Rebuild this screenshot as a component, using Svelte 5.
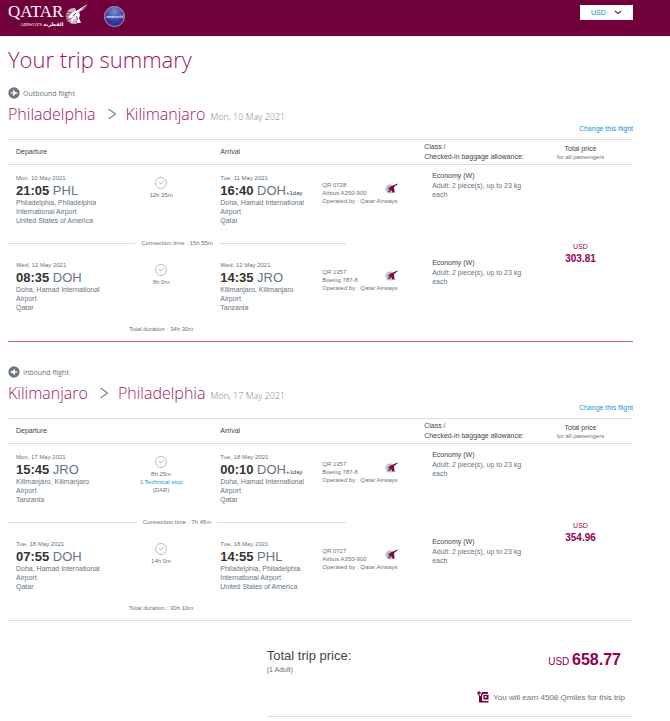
<script>
  const trips = [
    {
      id: 'outbound',
      label: 'Outbound flight',
      from: 'Philadelphia',
      to: 'Kilimanjaro',
      date: 'Mon, 10 May 2021',
      connection: '15h 55m',
      total: '34h 30m',
      price: '303.81',
      legs: [
        {
          departure: { date: 'Mon, 10 May 2021', time: '21:05', code: 'PHL', place: ['Philadelphia, Philadelphia', 'International Airport', 'United States of America'] },
          arrival: { date: 'Tue, 11 May 2021', time: '16:40', code: 'DOH', extra: '+1day', place: ['Doha, Hamad International', 'Airport', 'Qatar'] },
          duration: '12h 35m',
          flight: 'QR 0728',
          plane: 'Airbus A350-900'
        },
        {
          departure: { date: 'Wed, 12 May 2021', time: '08:35', code: 'DOH', place: ['Doha, Hamad International', 'Airport', 'Qatar'] },
          arrival: { date: 'Wed, 12 May 2021', time: '14:35', code: 'JRO', place: ['Kilimanjaro, Kilimanjaro', 'Airport', 'Tanzania'] },
          duration: '6h 0m',
          flight: 'QR 1357',
          plane: 'Boeing 787-8'
        }
      ]
    },
    {
      id: 'inbound',
      label: 'Inbound flight',
      from: 'Kilimanjaro',
      to: 'Philadelphia',
      date: 'Mon, 17 May 2021',
      connection: '7h 45m',
      total: '30h 10m',
      price: '354.96',
      legs: [
        {
          departure: { date: 'Mon, 17 May 2021', time: '15:45', code: 'JRO', place: ['Kilimanjaro, Kilimanjaro', 'Airport', 'Tanzania'] },
          arrival: { date: 'Tue, 18 May 2021', time: '00:10', code: 'DOH', extra: '+1day', place: ['Doha, Hamad International', 'Airport', 'Qatar'] },
          duration: '8h 25m',
          stop: '1 Technical stop',
          stopCode: '(DAR)',
          flight: 'QR 1357',
          plane: 'Boeing 787-8'
        },
        {
          departure: { date: 'Tue, 18 May 2021', time: '07:55', code: 'DOH', place: ['Doha, Hamad International', 'Airport', 'Qatar'] },
          arrival: { date: 'Tue, 18 May 2021', time: '14:55', code: 'PHL', place: ['Philadelphia, Philadelphia', 'International Airport', 'United States of America'] },
          duration: '14h 0m',
          flight: 'QR 0727',
          plane: 'Airbus A350-900'
        }
      ]
    }
  ];

  let currency = 'USD';
</script>

{#snippet endpoint(point)}
  <div class="date">{point.date}</div>
  <div class="time">
    <strong>{point.time}</strong> {point.code}{#if point.extra}<small>{point.extra}</small>{/if}
  </div>
  {#each point.place as line}
    <div class="place">{line}</div>
  {/each}
{/snippet}

<header>
  <a class="brand" href="#home" aria-label="Qatar Airways">
    <span class="brand-text">
      <span class="brand-name">QATAR</span>
      <span class="brand-sub">AIRWAYS <span lang="ar">القطرية</span></span>
    </span>
    <svg class="oryx" viewBox="0 0 24 22" aria-hidden="true">
      <path d="M12 4A8 8 0 1 0 17 17L13 18L15 10Z" fill="#cdb3c1" />
      <path d="M1 8l8 1M0 11l8 0M0 14l7-1M2 17l6-3M5 20l4-4" stroke="#70003a" stroke-width=".8" />
      <path d="M5 14c2-4 4-6 8-7L24 .5l-.5 1.200L17 6l6.500-3L16 8l1 3-1 3 2 5h-4l-1-5-3 2.500-2 3.500c-1-2 0-4 2-6l3-3.500-5 3.500z" fill="#fff" />
      <path d="M10 12l3-3M13.500 12l1 4" stroke="#70003a" stroke-width=".8" />
    </svg>
  </a>
  <a class="oneworld" href="#oneworld"><b>one</b>world</a>
  <label class="currency">
    <select bind:value={currency} aria-label="Currency">
      <option>USD</option>
      <option>EUR</option>
      <option>QAR</option>
    </select>
    <svg viewBox="0 0 8 5" aria-hidden="true"><path d="M1 1l3 2.500L7 1" fill="none" stroke="#8e2157" stroke-width="1.300" /></svg>
  </label>
</header>

<main>
  <h1>Your trip summary</h1>

  {#each trips as trip (trip.id)}
    <section class={trip.id}>
      <div class="direction">
        <svg viewBox="0 0 12 12" class:flip={trip.id === 'inbound'} aria-hidden="true">
          <circle cx="6" cy="6" r="5.700" fill="#6b7883" />
          <path d="M2.500 5.500h2.500L4.800 3.200h1L7.700 5.300H9q1.200.7 0 1.400H7.700L5.800 8.800h-1L5 6.500H2.500z" fill="#fff" />
        </svg>
        {trip.label}
      </div>

      <h2>
        {trip.from}
        <svg viewBox="0 0 8 12" aria-hidden="true"><path d="M.5 1l7 5-7 5" fill="none" stroke="#7b8a94" stroke-width="1.200" /></svg>
        {trip.to}
        <small>{trip.date}</small>
      </h2>

      <a class="change" href="#change-{trip.id}">Change this flight</a>

      <table>
        <colgroup>
          <col class="c-departure" />
          <col class="c-duration" />
          <col class="c-arrival" />
          <col class="c-flight" />
          <col class="c-class" />
          <col class="c-price" />
        </colgroup>
        <thead>
          <tr>
            <th>Departure</th>
            <td></td>
            <th>Arrival</th>
            <td></td>
            <th class="h-class">Class /<br />Checked-in baggage allowance:</th>
            <th class="h-price">Total price<small>for all passengers</small></th>
          </tr>
        </thead>
        <tbody>
          {#each trip.legs as leg, i}
            <tr class="leg">
              <td>{@render endpoint(leg.departure)}</td>
              <td class="duration">
                <svg viewBox="0 0 12 12" aria-hidden="true">
                  <circle cx="6" cy="6" r="5.500" fill="none" stroke="#98a3ab" stroke-width=".7" />
                  <path d="M4 5.200l1.800 1.600L8.600 4.200" fill="none" stroke="#98a3ab" stroke-width=".8" />
                </svg>
                <div class="hours">{leg.duration}</div>
                {#if leg.stop}
                  <a href="#stop">{leg.stop}</a>
                  <div>{leg.stopCode}</div>
                {/if}
              </td>
              <td>{@render endpoint(leg.arrival)}</td>
              <td class="flight">
                <div class="plane">
                  <div>{leg.flight}<br />{leg.plane}</div>
                  <svg viewBox="0 0 13 11" aria-hidden="true">
                    <circle cx="5" cy="6" r="4.500" fill="#b9c0c5" />
                    <path d="M3 6c1-1.500 2-2.500 4-3L12.500.5l.3.8L9 4v2l.8 3.500H7.200L6.500 7 4 9l-1.200.2L4.800 6z" fill="#7d0a45" />
                  </svg>
                </div>
                Operated by : Qatar Airways
              </td>
              <td class="cabin">
                <div>Economy (W)</div>
                <p>Adult: 2 piece(s), up to 23 kg each</p>
              </td>
              {#if i === 0}
                <td class="price" rowspan="4">USD<strong>{trip.price}</strong></td>
              {/if}
            </tr>
            {#if i === 0}
              <tr>
                <td class="connection" colspan="5">
                  <div>Connection time : {trip.connection}</div>
                </td>
              </tr>
            {/if}
          {/each}
          <tr class="total-duration">
            <td></td>
            <td>Total duration : {trip.total}</td>
            <td colspan="3"></td>
          </tr>
        </tbody>
      </table>
    </section>
  {/each}

  <section class="summary">
    <div class="total">
      <div class="total-label">Total trip price:<small>(1 Adult)</small></div>
      <div class="total-price">USD <strong>658.77</strong></div>
    </div>
    <div class="miles">
      <svg viewBox="0 0 12 12" aria-hidden="true">
        <path d="M2 0v5M0 2.200h4.500" stroke="#70003a" stroke-width="1.200" />
        <path d="M5 1h6v2H6.500L5 4.500v5L6.500 10H11.500v1.500H2V5h2V3h1z" fill="#70003a" />
        <rect x="6" y="3.700" width="5.500" height="5" rx=".5" fill="#70003a" />
        <path d="M11.500 3.200H6.200v5.800h5.300" fill="none" stroke="#fff" stroke-width=".6" />
        <circle cx="8.600" cy="6.100" r="1" fill="#fff" />
      </svg>
      You will earn 4508 Qmiles for this trip
    </div>
  </section>
</main>

<style>
  :global(body) {
    background: #fff;
    color: #66747f;
    font: 7px/9px 'Liberation Sans', Arial, sans-serif;
  }

  header {
    display: flex;
    align-items: center;
    height: 36px;
    box-sizing: border-box;
    padding: 0 37px 4px 8px;
    background: #70003a;
  }

  a {
    color: #1a96d2;
    text-decoration: none;
  }

  .brand {
    display: flex;
    color: #fff;
  }

  .brand-text {
    display: flex;
    flex-direction: column;
    font-family: 'Liberation Serif', serif;
  }

  .brand-name {
    font-size: 17px;
    line-height: 16px;
  }

  .brand-sub {
    padding-left: 12px;
    font-size: 5px;
    line-height: 8px;
    white-space: nowrap;
  }

  .brand-sub span {
    font-family: 'DejaVu Sans', sans-serif;
    font-weight: bold;
  }

  .oryx {
    width: 24px;
    height: 22px;
  }

  .oneworld {
    display: flex;
    align-items: center;
    justify-content: center;
    width: 19px;
    height: 19px;
    margin-left: 17px;
    border: 1px solid #a8a4d0;
    border-radius: 50%;
    background: radial-gradient(circle at 50% 25%, #8088cc, #3438a0 60%, #22247c);
    color: #fff;
    font-size: 4px;
  }

  .currency {
    display: flex;
    align-items: center;
    gap: 7px;
    height: 15px;
    margin: -8px 0 0 auto;
    padding: 0 11px;
    background: #fff;
  }

  select {
    appearance: none;
    padding: 0;
    border: 0;
    background: none;
    color: #1a86c4;
    font: 7px/9px 'Liberation Sans', Arial, sans-serif;
  }

  .currency svg {
    width: 8px;
    height: 5px;
  }

  main {
    padding: 8px 37px 0 8px;
  }

  h1,
  h2 {
    margin: 0;
    color: #9c1464;
    font-family: 'Open Sans', sans-serif;
    font-weight: 300;
  }

  h1 {
    margin-bottom: 12px;
    font-size: 22px;
    line-height: 30px;
  }

  .inbound {
    margin-top: 23px;
  }

  .direction {
    display: flex;
    align-items: center;
    gap: 3px;
    height: 14px;
    font-family: 'Open Sans', sans-serif;
  }

  .direction svg {
    width: 12px;
    height: 12px;
  }

  .flip {
    transform: scaleX(-1);
  }

  h2 {
    display: flex;
    align-items: baseline;
    height: 20px;
    margin-top: 4px;
    font-size: 16px;
    line-height: 20px;
  }

  h2 svg {
    width: 8px;
    height: 12px;
    margin: 0 10px 0 12px;
  }

  h2 small {
    margin-left: 5px;
    color: #7b8790;
    font-size: 9px;
  }

  .change {
    display: block;
    margin-bottom: 5px;
    line-height: 10px;
    text-align: right;
  }

  table {
    width: 100%;
    border-collapse: separate;
    border-spacing: 0;
    table-layout: fixed;
    border-bottom: 1px solid #cc5f9e;
  }

  .inbound table {
    border-color: #ddd;
  }

  .c-departure {
    width: 17.6%;
  }

  .c-duration {
    width: 13.8%;
  }

  .c-arrival {
    width: 17.6%;
  }

  .c-flight {
    width: 16.3%;
  }

  .c-class {
    width: 17.9%;
  }

  .c-price {
    width: 16.8%;
  }

  th,
  td {
    box-sizing: border-box;
    padding: 0;
    text-align: left;
    font-weight: normal;
    vertical-align: top;
  }

  thead th,
  thead td {
    height: 26px;
    border-top: 1px solid #ddd;
    border-bottom: 1px solid #ddd;
    color: #444;
    line-height: 10px;
    vertical-align: middle;
  }

  thead th {
    padding-left: 8px;
  }

  thead th:nth-child(3) {
    padding-left: 16px;
  }

  .h-class {
    white-space: nowrap;
  }

  thead .h-price {
    padding: 0;
    text-align: center;
  }

  .h-price small {
    display: block;
    color: #66747f;
    font-size: 6px;
    line-height: 7px;
  }

  .leg td {
    height: 69px;
    padding: 8px 0 0 8px;
    white-space: nowrap;
  }

  .leg td:nth-child(3) {
    padding-left: 16px;
  }

  .date {
    font-size: 6px;
    line-height: 10px;
  }

  .time {
    height: 15px;
    font-size: 13px;
    line-height: 15px;
  }

  .time strong {
    color: #333;
  }

  .time small {
    color: #444;
    font-size: 6px;
    line-height: 6px;
  }

  .leg .duration {
    padding: 12px 0 0;
    font-size: 6px;
    line-height: 8px;
    text-align: center;
  }

  .duration svg {
    display: block;
    width: 12px;
    height: 12px;
    margin: 0 auto 2px;
  }

  .leg .flight {
    padding-top: 16px;
    font-size: 6px;
    line-height: 8px;
  }

  .plane {
    display: flex;
    justify-content: space-between;
    height: 16px;
  }

  .plane svg {
    width: 13px;
    height: 11px;
    margin: 2px 18px 0 0;
  }

  .leg .cabin {
    padding: 6px 0 0 16px;
    line-height: 9px;
  }

  .cabin div {
    color: #444;
    line-height: 10px;
  }

  .cabin p {
    margin: 0 4px 0 0;
    white-space: normal;
  }

  .leg .price {
    padding: 0;
    color: #92004f;
    line-height: 12px;
    text-align: center;
    vertical-align: middle;
  }

  .price strong {
    display: block;
    font-size: 10px;
  }

  .connection div {
    display: flex;
    align-items: center;
    gap: 6px;
    width: 65%;
    height: 18px;
    font-size: 6px;
    white-space: nowrap;
  }

  .connection div::before,
  .connection div::after {
    content: '';
    flex: 1;
    height: 1px;
    background: #ddd;
  }

  .total-duration td {
    height: 20px;
    padding-top: 4px;
    font-size: 6px;
    line-height: 8px;
    text-align: center;
    white-space: nowrap;
  }

  .summary {
    width: 58.6%;
    margin: 26px 0 0 auto;
    border-bottom: 1px solid #ddd;
  }

  .total {
    display: flex;
    align-items: center;
    justify-content: space-between;
    padding-right: 12px;
  }

  .total-label {
    color: #444;
    font-size: 13px;
    line-height: 18px;
  }

  .total-label small {
    display: block;
    color: #66747f;
    font-size: 7px;
    line-height: 9px;
  }

  .total-price {
    color: #92004f;
    font-size: 10px;
    line-height: 20px;
  }

  .total-price strong {
    font-size: 16px;
  }

  .miles {
    display: flex;
    align-items: center;
    justify-content: flex-end;
    gap: 4px;
    padding: 17px 8px 13px 0;
    font-size: 8px;
  }

  .miles svg {
    width: 12px;
    height: 12px;
  }
</style>
